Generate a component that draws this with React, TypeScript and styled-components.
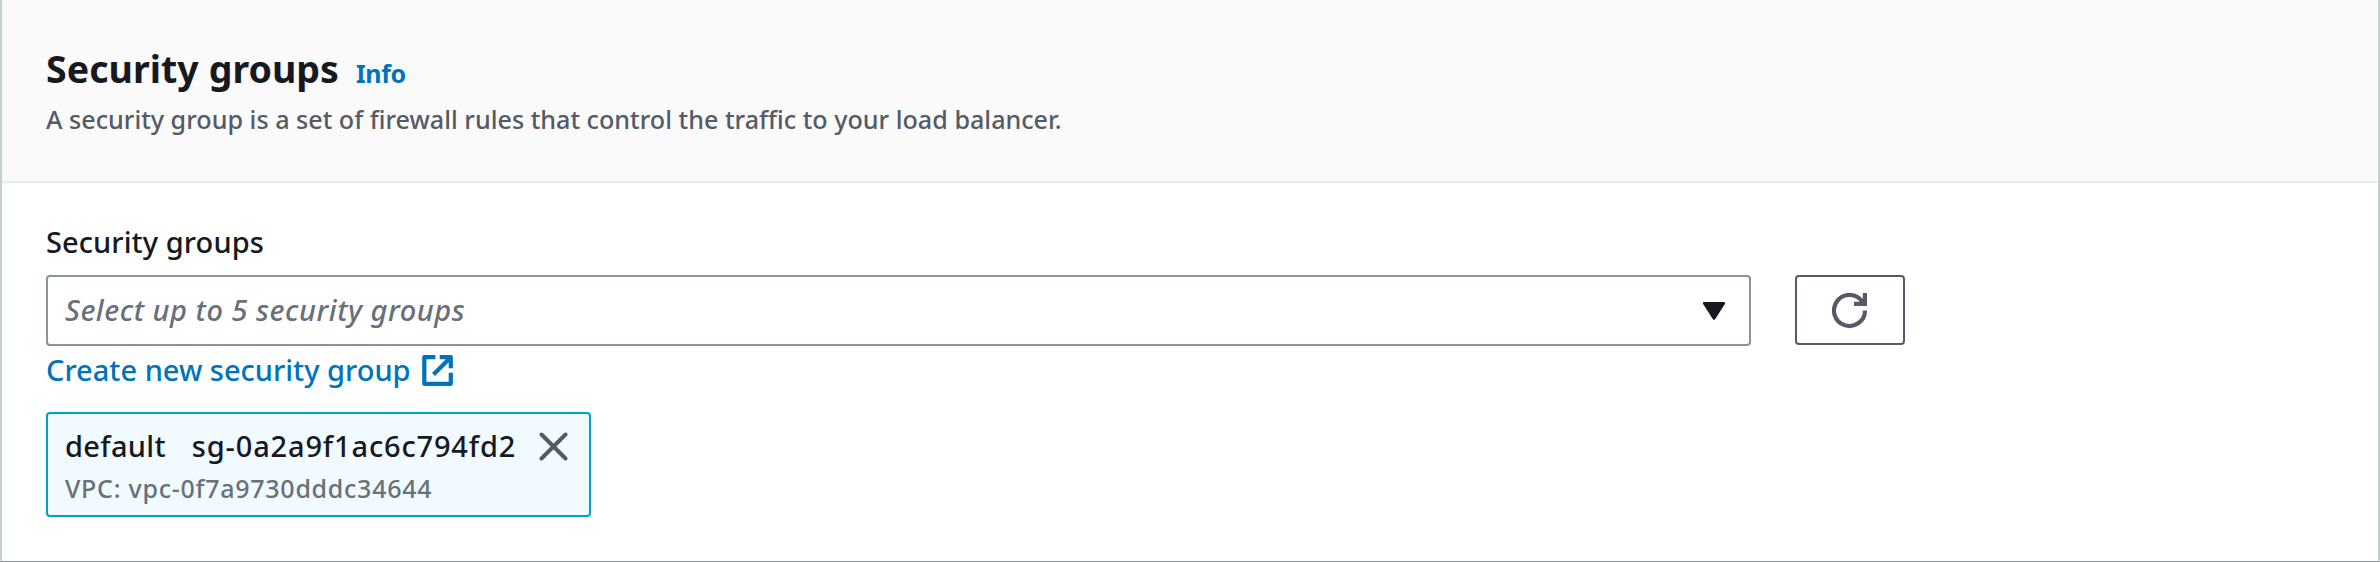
import React from "react";
import styled, { createGlobalStyle } from "styled-components";

const GlobalStyle = createGlobalStyle`
  *, *::before, *::after { box-sizing: border-box; }
  body {
    margin: 0;
    background: #fff;
    color: #16191f;
    font-family: "Noto Sans", "Open Sans", sans-serif;
    font-weight: 500;
  }
  svg { display: block; flex: none; }
`;

const Panel = styled.section`
  display: flex;
  flex-direction: column;
  width: 100%;
  height: 562px;
  background: #fff;
  border: solid #c5cdce;
  border-width: 0 2px 1px;
  border-bottom-color: #879596;
`;

const PanelHeader = styled.header`
  height: 183px;
  padding: 46px 44px 0;
  background: #fafafa;
  border-bottom: 2px solid #eaeded;
`;

const TitleRow = styled.div`
  display: flex;
  align-items: baseline;
  gap: 17px;
`;

const Title = styled.h2`
  margin: 0;
  font-size: 37.5px;
  line-height: 46px;
  font-weight: 700;
  letter-spacing: 0.05px;
`;

const InfoLink = styled.a`
  color: #0073bb;
  font-size: 25px;
  line-height: 34px;
  font-weight: 700;
  letter-spacing: -0.4px;
`;

const Description = styled.p`
  margin: 9px 0 0;
  color: #545b64;
  font-size: 25.15px;
  line-height: 36px;
`;

const PanelBody = styled.div`
  display: flex;
  flex-direction: column;
  align-items: flex-start;
  padding: 41px 44px 0;
`;

const FieldLabel = styled.label`
  font-size: 29px;
  line-height: 36px;
  letter-spacing: 0.08px;
`;

const SelectRow = styled.div`
  display: flex;
  align-items: flex-start;
  gap: 44px;
  margin-top: 15px;
`;

const Select = styled.div`
  display: flex;
  align-items: center;
  justify-content: space-between;
  width: 1705px;
  height: 71px;
  padding: 0 23px 0 17px;
  border: 2px solid #879596;
  border-radius: 4px;
`;

const Placeholder = styled.span`
  padding-bottom: 2px;
  color: #687078;
  font-size: 29px;
  line-height: 36px;
  font-style: italic;
  letter-spacing: 0.53px;
`;

const RefreshButton = styled.button`
  display: flex;
  align-items: center;
  justify-content: center;
  width: 110px;
  height: 70px;
  padding: 1px 0 0;
  color: #545b64;
  background: #fff;
  border: 2px solid #545b64;
  border-radius: 4px;
`;

const CreateLink = styled.a`
  display: flex;
  align-items: center;
  gap: 11px;
  margin-top: 6px;
  color: #0073bb;
  font-size: 29px;
  line-height: 36px;
`;

const Token = styled.div`
  display: flex;
  align-items: flex-start;
  justify-content: space-between;
  width: 545px;
  height: 105px;
  margin-top: 24px;
  padding: 14px 21px 0 17px;
  background: #f1faff;
  border: 2px solid #00a1c9;
  border-radius: 4px;
`;

const TokenName = styled.div`
  display: flex;
  gap: 26px;
  font-size: 29px;
  line-height: 36px;
  letter-spacing: 0.3px;
`;

const TokenId = styled.span`
  letter-spacing: 0.84px;
`;

const TokenDetail = styled.div`
  margin-top: 7px;
  color: #687078;
  font-size: 25px;
  line-height: 34px;
  letter-spacing: 0.74px;
`;

const DismissButton = styled.button`
  margin: 4px 0 0;
  padding: 0;
  color: #545b64;
  background: none;
  border: 0;
`;

const CaretIcon = () => (
  <svg width="24" height="20" viewBox="0 0 24 20" aria-hidden="true">
    <path d="M2.2 2.2H21.8L12 17.5Z" fill="#16191f" stroke="#16191f" strokeWidth="2.6" strokeLinejoin="round" />
  </svg>
);

const RefreshIcon = () => (
  <svg width="36" height="36" viewBox="0 0 36 36" fill="none" stroke="currentColor" strokeWidth="4.2" aria-hidden="true">
    <path d="M33 17.4A15.5 15.5 0 1 1 30.6 9.2" />
    <path d="M22 10.9H32.9V0" />
  </svg>
);

const ExternalIcon = () => (
  <svg width="31" height="31" viewBox="0 0 31 31" fill="none" stroke="currentColor" strokeWidth="4.2" aria-hidden="true">
    <path d="M13.3 2.2H2.3V28.8H28.8V17.7" strokeLinejoin="round" />
    <path d="M17.7 2.2H28.8V13.3" strokeLinejoin="round" />
    <path d="M11.5 19.5L28.5 2.5" />
  </svg>
);

const CloseIcon = () => (
  <svg width="29" height="29" viewBox="0 0 29 29" fill="none" stroke="currentColor" strokeWidth="4" strokeLinecap="round" aria-hidden="true">
    <path d="M2.5 2.5L26.5 26.5M26.5 2.5L2.5 26.5" />
  </svg>
);

export default function App() {
  return (
    <>
      <GlobalStyle />
      <Panel>
        <PanelHeader>
          <TitleRow>
            <Title>Security groups</Title>
            <InfoLink>Info</InfoLink>
          </TitleRow>
          <Description>
            A security group is a set of firewall rules that control the traffic to your load balancer.
          </Description>
        </PanelHeader>
        <PanelBody>
          <FieldLabel>Security groups</FieldLabel>
          <SelectRow>
            <Select role="combobox">
              <Placeholder>Select up to 5 security groups</Placeholder>
              <CaretIcon />
            </Select>
            <RefreshButton aria-label="Refresh">
              <RefreshIcon />
            </RefreshButton>
          </SelectRow>
          <CreateLink>
            Create new security group
            <ExternalIcon />
          </CreateLink>
          <Token>
            <div>
              <TokenName>
                <span>default</span>
                <TokenId>sg-0a2a9f1ac6c794fd2</TokenId>
              </TokenName>
              <TokenDetail>VPC: vpc-0f7a9730dddc34644</TokenDetail>
            </div>
            <DismissButton aria-label="Remove default">
              <CloseIcon />
            </DismissButton>
          </Token>
        </PanelBody>
      </Panel>
    </>
  );
}
